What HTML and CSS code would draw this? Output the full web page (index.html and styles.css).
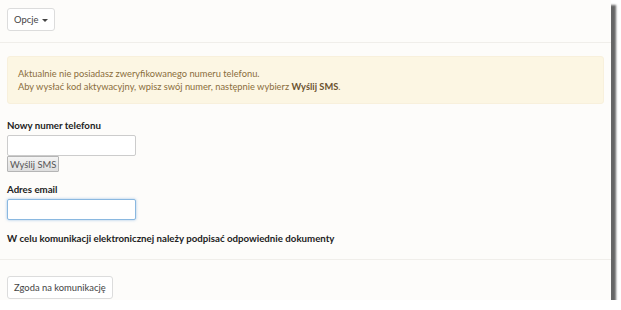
FILE: index.html
```html
<!DOCTYPE html>
<html lang="pl">
<head>
    <meta charset="UTF-8">
    <title>Komunikacja</title>
    <link rel="stylesheet" href="styles.css">
</head>
<body>

    <div class="window">
        <!-- Pasek opcji -->
        <div class="toolbar">
            <button class="btn">Opcje <span class="caret"></span></button>
        </div>

        <div class="content">
            <div class="alert">
                Aktualnie nie posiadasz zweryfikowanego numeru telefonu.<br>
                Aby wysłać kod aktywacyjny, wpisz swój numer, następnie wybierz <b>Wyślij SMS</b>.
            </div>

            <label class="label">Nowy numer telefonu</label>
            <input type="text" class="field">
            <button class="btn-sms">Wyślij SMS</button>

            <label class="label label-email">Adres email</label>
            <input type="text" class="field field-focus">

            <p class="info">W celu komunikacji elektronicznej należy podpisać odpowiednie dokumenty</p>
        </div>

        <div class="footer">
            <button class="btn btn-wide">Zgoda na komunikację</button>
        </div>
    </div>

</body>
</html>
```

FILE: styles.css
```css
* {
    margin: 0;
    padding: 0;
    box-sizing: border-box;
    font-family: Lato, "Liberation Sans", Arial, sans-serif;
}

body {
    background-color: #ffffff;
    color: #333;
    font-size: 9.3px;
}

.window {
    width: 611px;
    height: 300px;
    background-color: #fdfcfa;
    box-shadow: 5px 5px 2px rgba(0, 0, 0, 0.6);
}

/* Pasek opcji */
.toolbar {
    padding: 8px 7px 11px;
    border-bottom: 1px solid #f0eeea;
}

.btn {
    display: block;
    height: 23px;
    padding: 0 6px;
    background-color: #fff;
    border: 1px solid #dcdcdc;
    border-radius: 3px;
    color: #444;
    font-size: 9.4px;
}

.caret {
    display: inline-block;
    width: 0;
    height: 0;
    margin-left: 1px;
    vertical-align: middle;
    border-top: 3px solid #444;
    border-left: 3px solid transparent;
    border-right: 3px solid transparent;
}

.content {
    padding: 13px 7px 0;
    border-bottom: 1px solid #f0eeea;
    height: 217px;
}

.alert {
    background-color: #fcf6e3;
    border: 1px solid #f8f0dc;
    color: #8a6d3b;
    padding: 10px 10px;
    line-height: 13px;
    border-radius: 3px;
}

.alert b {
    color: #6b5230;
}

.label {
    display: block;
    margin-top: 15px;
    font-size: 9.7px;
    font-weight: bold;
    color: #222;
    line-height: 12px;
}

.label-email {
    margin-top: 11px;
}

.field {
    display: block;
    width: 129px;
    height: 21px;
    margin-top: 4px;
    border: 1px solid #ccc;
    border-radius: 2px;
    background: #fff;
}

.field-focus {
    border-color: #8ab8e0;
    box-shadow: 0 0 3px rgba(102, 160, 220, 0.6);
}

.btn-sms {
    display: block;
    height: 16px;
    padding: 0 2px;
    background: linear-gradient(#f4f4f4, #dedede);
    border: 1px solid #b5b5b5;
    border-radius: 1px;
    color: #555;
    font-size: 9.4px;
}

.info {
    margin-top: 12px;
    font-size: 9.7px;
    font-weight: bold;
    color: #222;
}

.footer {
    padding: 16px 7px;
}

.btn-wide {
    height: 23px;
    padding: 0 6px;
}
```
